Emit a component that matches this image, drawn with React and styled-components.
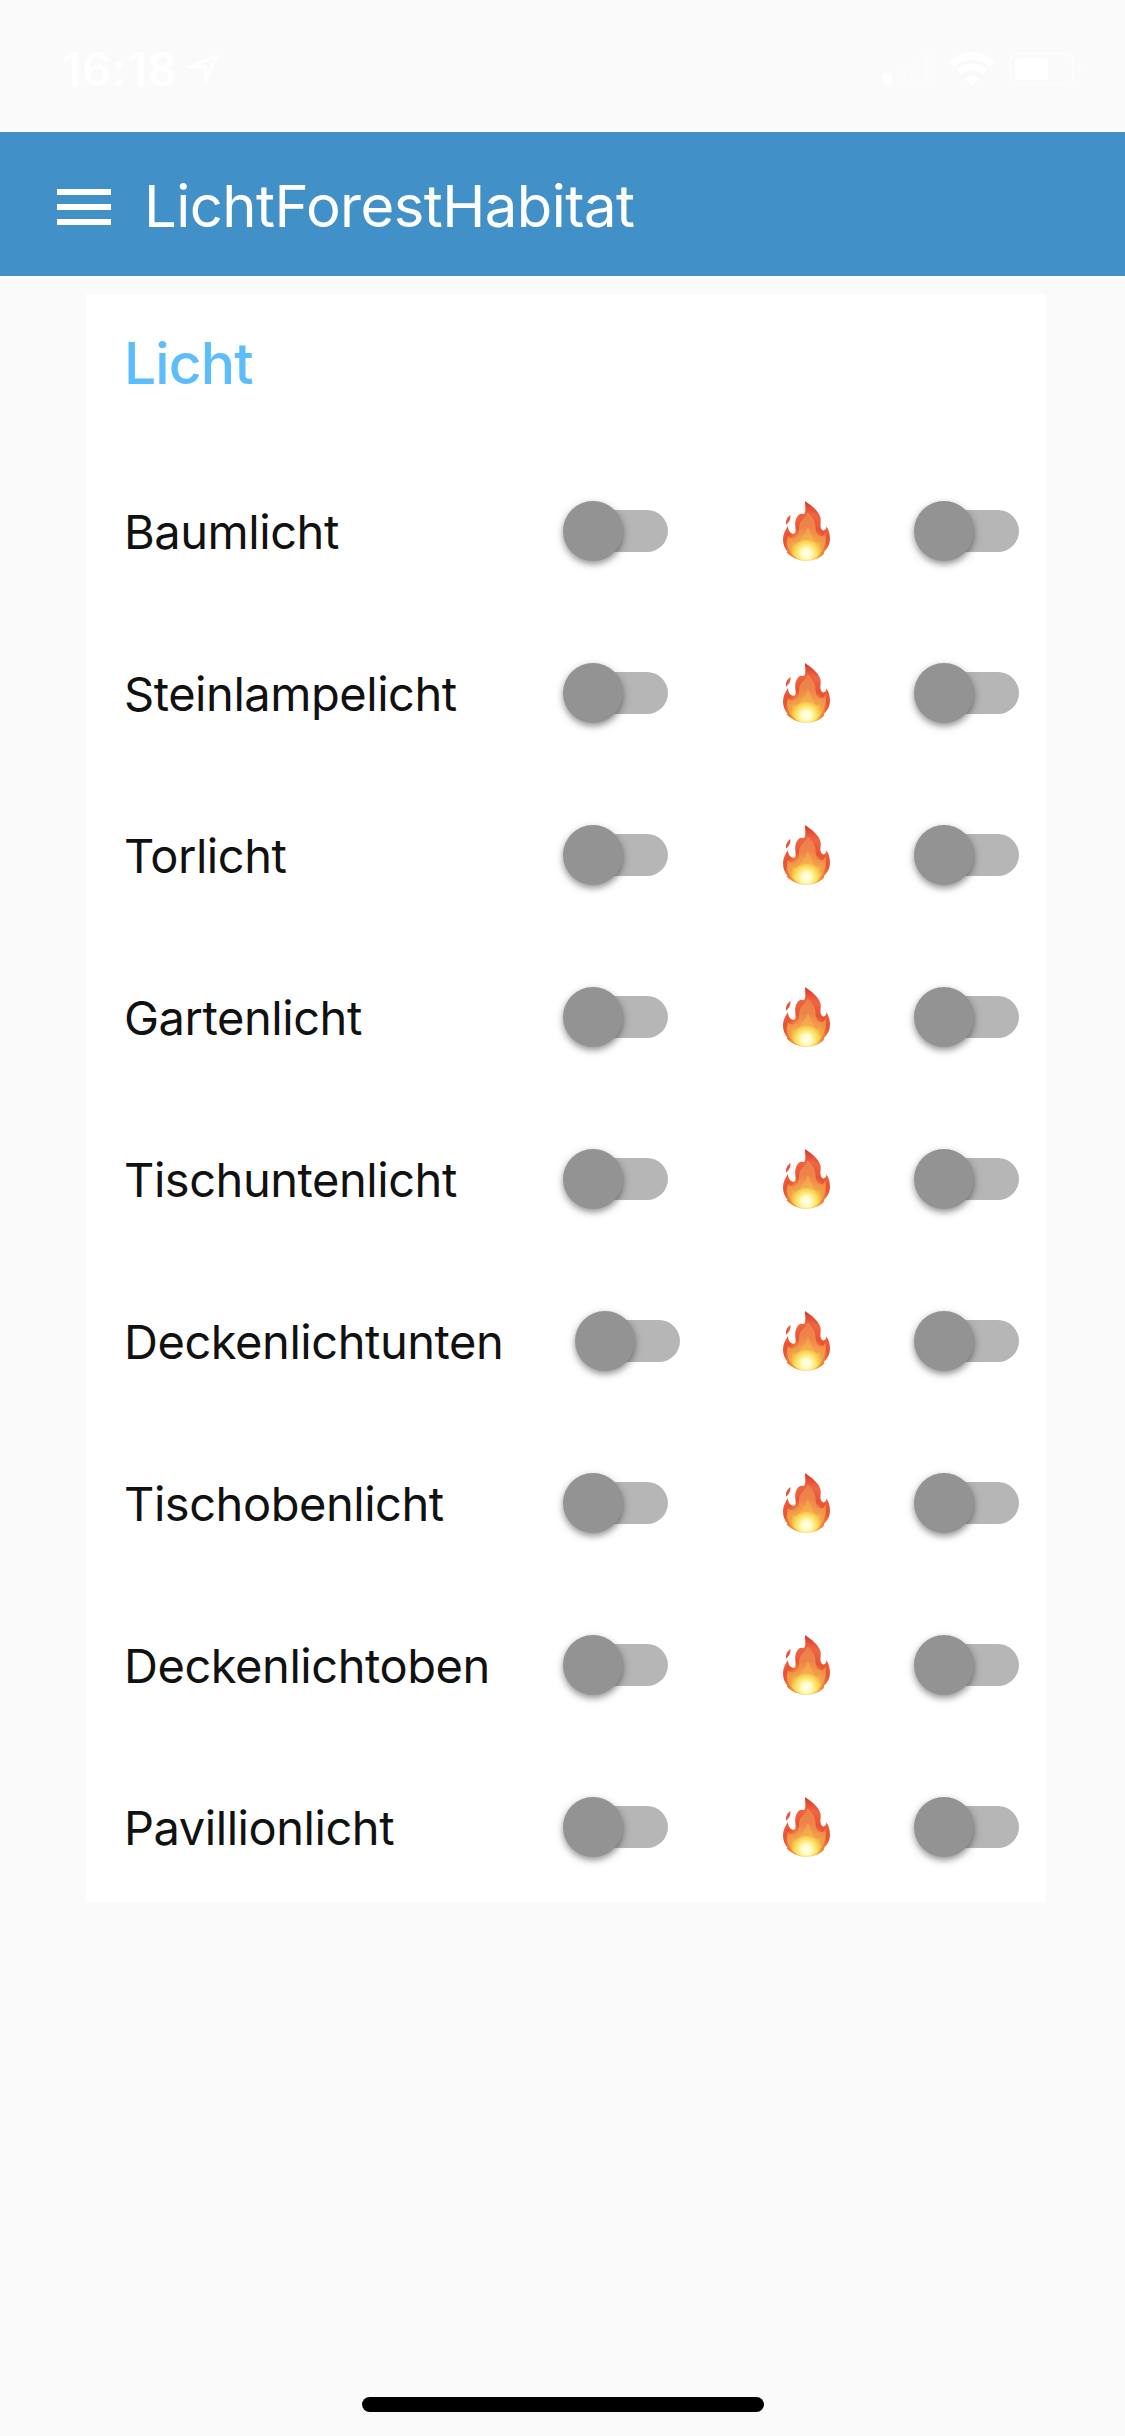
import React, { useState } from "react";
import styled, { createGlobalStyle } from "styled-components";

const GlobalStyle = createGlobalStyle`
  body {
    margin: 0;
    background: #fafafa;
    font-family: Inter, "Liberation Sans", sans-serif;
  }
`;

const Page = styled.div`
  display: flex;
  flex-direction: column;
  height: 2436px;
  background: #fafafa;
`;

const StatusBar = styled.div`
  display: flex;
  justify-content: space-between;
  height: 132px;
  color: white;
`;

const Clock = styled.div`
  display: flex;
  align-items: flex-start;
  padding: 40px 0 0 62px;
  font-size: 46px;
  line-height: 58px;
  font-weight: 600;
  letter-spacing: 0.6px;

  svg {
    margin: 13px 0 0 10px;
  }
`;

const Indicators = styled.div`
  display: flex;
  padding: 52px 43px 0 0;
`;

const Header = styled.header`
  display: flex;
  align-items: center;
  height: 144px;
  padding-left: 57px;
  background: #4290c8;
`;

const MenuButton = styled.button`
  display: flex;
  flex-direction: column;
  gap: 9px;
  width: 54px;
  padding: 6px 0 0;
  border: 0;
  margin: 0 33px 0 0;
  background: none;
`;

const MenuBar = styled.span`
  height: 6px;
  background: white;
`;

const AppTitle = styled.h1`
  margin: 0;
  padding-top: 3px;
  color: white;
  font-size: 58px;
  line-height: 72px;
  font-weight: 400;
  letter-spacing: -0.55px;
`;

const Card = styled.section`
  box-sizing: border-box;
  width: 960px;
  height: 1608px;
  margin: 18px 0 0 86px;
  padding: 34px 27px 0 38px;
  background: white;
`;

const CardTitle = styled.h2`
  margin: 0 0 50px;
  color: #5bbdfc;
  font-size: 57px;
  line-height: 72px;
  font-weight: 500;
  letter-spacing: -0.9px;
`;

const Row = styled.div`
  display: flex;
  align-items: center;
  height: 162px;
`;

const Label = styled.div`
  min-width: 367px;
  margin-right: 72px;
  padding-top: 2px;
  color: #111;
  font-size: 47px;
  line-height: 60px;
  letter-spacing: -0.45px;
  white-space: nowrap;
`;

const FlameCell = styled.div`
  display: flex;
  margin-left: auto;
  margin-right: 84px;
`;

const Track = styled.button`
  display: flex;
  align-items: center;
  flex-shrink: 0;
  width: 102px;
  height: 42px;
  padding: 0;
  border: 0;
  border-radius: 21px;
  margin-left: 3px;
  background: ${(props) => (props.$on ? "#a1c8e4" : "#b6b6b6")};
`;

const Thumb = styled.span`
  flex-shrink: 0;
  width: 60px;
  height: 60px;
  border-radius: 50%;
  margin-left: ${(props) => (props.$on ? "45px" : "-3px")};
  background: ${(props) => (props.$on ? "#4290c8" : "#939393")};
  box-shadow: 0 3px 6px rgba(0, 0, 0, 0.36), 0 3px 12px rgba(0, 0, 0, 0.1);
`;

const HomeIndicator = styled.div`
  width: 402px;
  height: 15px;
  border-radius: 8px;
  margin: auto auto 24px 362px;
  background: black;
`;

const lights = [
  "Baumlicht",
  "Steinlampelicht",
  "Torlicht",
  "Gartenlicht",
  "Tischuntenlicht",
  "Deckenlichtunten",
  "Tischobenlicht",
  "Deckenlichtoben",
  "Pavillionlicht",
];

const WifiGap = styled.span`
  width: 15px;
`;

const BatteryGap = styled.span`
  width: 14px;
`;

function LocationIcon() {
  return (
    <svg width="32" height="32" viewBox="0 0 32 32" fill="none">
      <path
        d="M29.500 3 3 14H18.500V28.500Z"
        stroke="white"
        strokeWidth="3.200"
        strokeLinejoin="round"
      />
    </svg>
  );
}

function SignalIcon() {
  return (
    <svg width="51" height="34" viewBox="0 0 51 34" fill="white">
      <rect y="21" width="9" height="12" rx="3" />
      <g opacity="0.25">
        <rect x="14" y="15" width="9" height="18" rx="3" />
        <rect x="28" y="8" width="9" height="25" rx="3" />
        <rect x="42" y="1" width="9" height="32" rx="3" />
      </g>
    </svg>
  );
}

function WifiIcon() {
  return (
    <svg width="46" height="34" viewBox="0 0 46 34" fill="none" stroke="white">
      <path d="M2.500 12.500C14 .8 32 .8 43.500 12.500" strokeWidth="7" />
      <path d="M10.300 20C17.500 13.300 28.500 13.300 35.700 20" strokeWidth="6.500" />
      <path d="M16 26.500C20 22.300 26 22.300 30 26.500L23 33.500Z" fill="white" stroke="none" />
    </svg>
  );
}

function BatteryIcon() {
  return (
    <svg width="73" height="34" viewBox="0 0 73 34" fill="white">
      <rect
        x="1.500"
        y="1.500"
        width="63"
        height="31"
        rx="9"
        fill="none"
        stroke="white"
        strokeWidth="3"
        opacity="0.4"
      />
      <rect x="6" y="6" width="33" height="22" rx="4" />
      <path d="M69 11c5 2 5 10 0 12z" opacity="0.4" />
    </svg>
  );
}

function FlameIcon({ id }) {
  const outer = `${id}-outer`;
  const middle = `${id}-middle`;
  const core = `${id}-core`;
  return (
    <svg width="47" height="60" viewBox="0 0 141 180">
      <defs>
        <radialGradient id={outer} gradientUnits="userSpaceOnUse" cx="70" cy="145" r="140">
          <stop offset="0" stopColor="#ffd84a" />
          <stop offset="0.3" stopColor="#f49a40" />
          <stop offset="0.48" stopColor="#e95232" />
          <stop offset="0.75" stopColor="#ee6643" />
          <stop offset="1" stopColor="#dd3a2b" />
        </radialGradient>
        <linearGradient id={middle} x1="0" y1="0" x2="0" y2="1">
          <stop offset="0" stopColor="#ed8350" />
          <stop offset="0.5" stopColor="#f09850" />
          <stop offset="0.75" stopColor="#f3ab46" />
          <stop offset="1" stopColor="#ffe24a" />
        </linearGradient>
        <radialGradient id={core} gradientUnits="userSpaceOnUse" cx="70" cy="157" r="50">
          <stop offset="0" stopColor="#fffff0" />
          <stop offset="0.3" stopColor="#fffbc4" />
          <stop offset="0.65" stopColor="#fbea62" stopOpacity="0.75" />
          <stop offset="1" stopColor="#f8cf4a" stopOpacity="0" />
        </radialGradient>
      </defs>
      <path
        d="M66 0C86 14 105 28 112 48C116 62 109 72 115 84C120 92 131 88 130 76C138 87 141 100 141 114C140 132 132 144 124 151L122 160C108 173 90 179 70 179C48 179 27 172 10 153L14 153C4 141 0 129 0 115C0 99 7 87 15 75C15 88 22 99 32 98C40 97 38 87 37 77C35 60 41 44 51 39C58 37 60 42 65 37C69 29 66 13 66 0Z"
        fill={`url(#${outer})`}
      />
      <path d="M22 42C24 55 17 64 9 71C7 58 13 50 22 42Z" fill="#e8533a" />
      <path
        d="M73 34C88 47 98 62 98 82C98 95 104 106 115 106C123 105 126 98 127 92C132 113 126 134 119 146C107 164 91 175 70 176C46 175 28 165 20 148C10 134 11 118 15 104C20 115 37 115 44 104C52 93 45 80 51 67C57 53 71 49 73 34Z"
        fill={`url(#${middle})`}
        opacity="0.8"
      />
      <path
        d="M74 75C79 92 87 101 91 116C96 127 105 127 111 121C116 139 105 157 94 166C81 177 59 177 46 166C32 156 24 140 29 123C36 132 48 129 52 118C59 104 73 95 74 75Z"
        fill="#fbc84c"
        opacity="0.35"
      />
      <ellipse cx="70" cy="148" rx="44" ry="31" fill={`url(#${core})`} />
    </svg>
  );
}

function Switch({ label }) {
  const [on, setOn] = useState(false);
  return (
    <Track role="switch" aria-checked={on} aria-label={label} $on={on} onClick={() => setOn(!on)}>
      <Thumb $on={on} />
    </Track>
  );
}

function LightRow({ name }) {
  return (
    <Row>
      <Label>{name}</Label>
      <Switch label={name} />
      <FlameCell>
        <FlameIcon id={name} />
      </FlameCell>
      <Switch label={`${name} Flamme`} />
    </Row>
  );
}

export default function App() {
  return (
    <Page>
      <GlobalStyle />
      <StatusBar>
        <Clock>
          16:18
          <LocationIcon />
        </Clock>
        <Indicators>
          <SignalIcon />
          <WifiGap />
          <WifiIcon />
          <BatteryGap />
          <BatteryIcon />
        </Indicators>
      </StatusBar>
      <Header>
        <MenuButton aria-label="Menü">
          <MenuBar />
          <MenuBar />
          <MenuBar />
        </MenuButton>
        <AppTitle>LichtForestHabitat</AppTitle>
      </Header>
      <Card>
        <CardTitle>Licht</CardTitle>
        {lights.map((name) => (
          <LightRow key={name} name={name} />
        ))}
      </Card>
      <HomeIndicator />
    </Page>
  );
}
